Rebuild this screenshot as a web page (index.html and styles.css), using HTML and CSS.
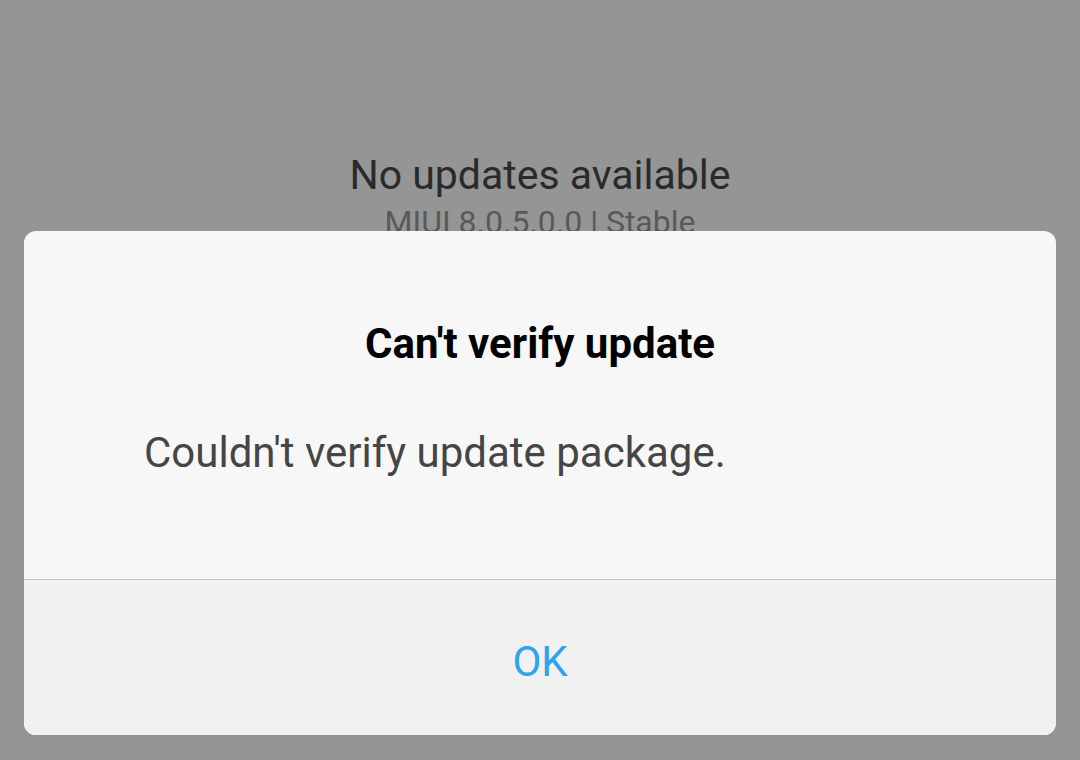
FILE: index.html
```html
<!DOCTYPE html>
<html>
<head>
    <meta charset="UTF-8">
    <title>Updater</title>
    <link rel="stylesheet" href="styles.css">
</head>
<body>
    <!-- 背景：更新页面 -->
    <div class="page">
        <div class="status">
            <p class="status_title">No updates available</p>
            <p class="status_version">MIUI 8.0.5.0.0 | Stable</p>
        </div>
    </div>
    <!-- 弹窗 -->
    <div class="dialog">
        <div class="dialog_body">
            <h2 class="dialog_title">Can't verify update</h2>
            <p class="dialog_msg">Couldn't verify update package.</p>
        </div>
        <div class="dialog_buttons">
            <a href="javascript:;" class="btn_ok">OK</a>
        </div>
    </div>
</body>
</html>
```

FILE: styles.css
```css
* {
    margin: 0;
    padding: 0;
}
a {
    text-decoration: none;
}
body {
    width: 1080px;
    height: 760px;
    background-color: #959595;
    font-family: Roboto, "Liberation Sans", sans-serif;
    position: relative;
    overflow: hidden;
}
.page .status {
    padding-top: 150px;
    text-align: center;
}
.page .status_title {
    font-size: 41px;
    line-height: 50px;
    color: #2a2a2a;
}
.page .status_version {
    margin-top: 2px;
    font-size: 32px;
    line-height: 40px;
    color: #595959;
}
/* 弹窗盖在页面上面 */
.dialog {
    position: absolute;
    left: 24px;
    right: 24px;
    top: 231px;
    height: 504px;
    border-radius: 12px;
    overflow: hidden;
    display: flex;
    flex-direction: column;
    background-color: #f7f7f7;
}
.dialog .dialog_body {
    height: 349px;
    border-bottom: 1px solid #c2c2c2;
    box-sizing: border-box;
    padding-top: 88px;
}
.dialog .dialog_title {
    text-align: center;
    font-size: 42px;
    font-weight: bold;
    line-height: 50px;
    color: #000;
}
.dialog .dialog_msg {
    margin-top: 59px;
    padding-left: 120px;
    font-size: 42px;
    line-height: 50px;
    color: #454545;
}
.dialog .dialog_buttons {
    flex: 1;
    background-color: #f1f1f1;
    display: flex;
    align-items: center;
    justify-content: center;
}
.dialog .btn_ok {
    margin-top: 8px;
    font-size: 42px;
    line-height: 50px;
    color: #2fa3ee;
}
```
